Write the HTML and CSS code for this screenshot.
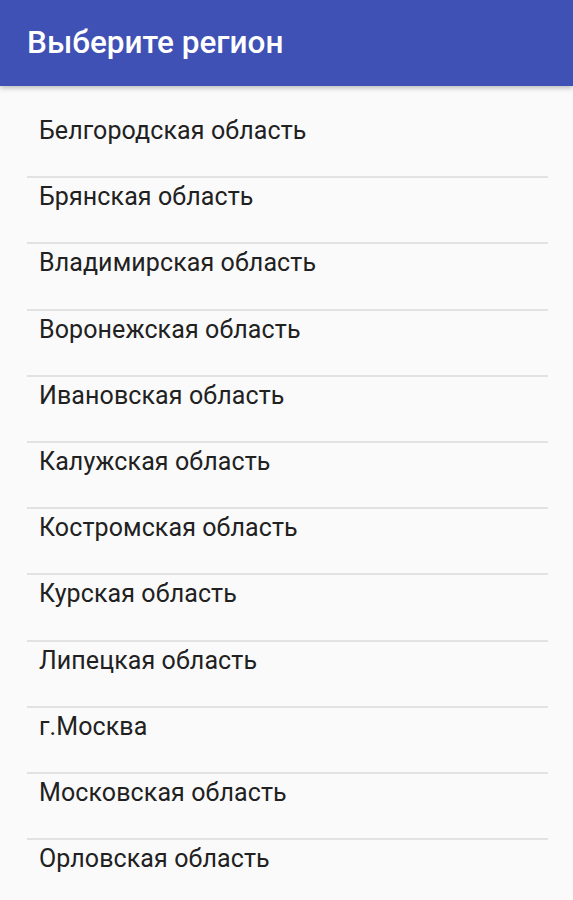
FILE: index.html
```html
<!DOCTYPE html>
<html lang="ru">
<head>
  <meta charset="UTF-8" />
  <meta name="viewport" content="width=device-width, initial-scale=1.0"/>
  <title>Выберите регион</title>
  <link rel="stylesheet" href="styles.css">
</head>
<body>

  <header class="toolbar">
    <div class="toolbar-title">Выберите регион</div>
  </header>

  <ul class="region-list">
    <li>Белгородская область</li>
    <li>Брянская область</li>
    <li>Владимирская область</li>
    <li>Воронежская область</li>
    <li>Ивановская область</li>
    <li>Калужская область</li>
    <li>Костромская область</li>
    <li>Курская область</li>
    <li>Липецкая область</li>
    <li>г.Москва</li>
    <li>Московская область</li>
    <li>Орловская область</li>
  </ul>

</body>
</html>
```

FILE: styles.css
```css
body {
  margin: 0;
  font-family: Roboto, "Noto Sans", Arial, sans-serif;
  background-color: #fafafa;
  overflow: hidden;
}

.toolbar {
  position: relative;
  z-index: 1;
  height: 86px;
  display: flex;
  align-items: center;
  padding: 0 27px;
  background-color: #3f51b5;
  box-shadow: 0 2px 5px rgba(0,0,0,0.25);
}

.toolbar-title {
  color: #fff;
  font-size: 31.5px;
  font-weight: 500;
  margin-top: -2px;
}

.region-list {
  list-style: none;
  margin: 0;
  padding: 26px 25px 0 27px;
}

.region-list li {
  height: 64.2px;
  padding: 0 0 0 12px;
  font-size: 25px;
  line-height: 38px;
  letter-spacing: 0.1px;
  color: #212121;
  border-bottom: 2px solid #e2e2e2;
  box-sizing: content-box;
}
```
